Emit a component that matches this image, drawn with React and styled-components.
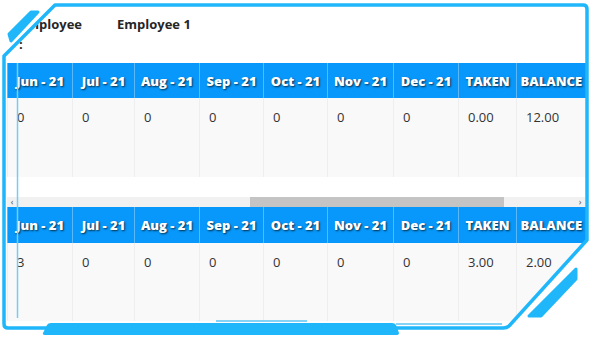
import React from 'react'
import styled, { createGlobalStyle } from 'styled-components'

const GlobalStyle = createGlobalStyle`
    html, body {
        margin: 0;
        padding: 0;
        background: #ffffff;
    }
    body {
        font-family: "Open Sans", "Liberation Sans", sans-serif;
    }
`

const columns = [
    { label: 'Jun - 21', width: 65 },
    { label: 'Jul - 21', width: 62 },
    { label: 'Aug - 21', width: 65 },
    { label: 'Sep - 21', width: 64 },
    { label: 'Oct - 21', width: 64 },
    { label: 'Nov - 21', width: 66 },
    { label: 'Dec - 21', width: 65 },
    { label: 'TAKEN', width: 58 },
    { label: 'BALANCE', width: 69 },
]

const rows = [
    ['0', '0', '0', '0', '0', '0', '0', '0.00', '12.00'],
    ['3', '0', '0', '0', '0', '0', '0', '3.00', '2.00'],
]

const Frame = styled.div`
    position: relative;
    width: 600px;
    height: 340px;
    overflow: hidden;
`

const Content = styled.div`
    height: 100%;
    box-sizing: border-box;
    padding: 8px 15px 0 7px;
    display: flex;
    flex-direction: column;
    clip-path: polygon(56px 6px, 586px 6px, 586px 240px, 507px 326px, 5px 326px, 5px 57px);
`

const InfoRow = styled.div`
    display: flex;
    height: 55px;
    box-sizing: border-box;
    padding: 6px 0 0 12px;
    font-size: 13px;
    font-weight: 700;
    line-height: 20px;
    color: #262626;
`

const InfoLabel = styled.div`
    width: 66px;
    margin-right: 32px;
`

const Table = styled.table`
    width: 578px;
    border-collapse: collapse;
    table-layout: fixed;
`

const HeadCell = styled.th`
    height: ${p => p.$tall ? 36 : 35}px;
    padding: 0;
    background: #0898fb;
    border-left: 1px solid #5ab8fb;
    color: #ffffff;
    font-size: 13px;
    font-weight: 800;
    text-align: center;
    text-shadow: 1px 1px 2px rgba(0, 0, 0, 0.7);
    white-space: nowrap;
`

const BodyCell = styled.td`
    height: ${p => p.$height}px;
    box-sizing: border-box;
    padding: 9px 8px 0 9px;
    vertical-align: top;
    background: #f9f9f9;
    border-left: 1px solid #eeeeee;
    color: #333333;
    font-size: 13px;
    line-height: 20px;
`

const Gap = styled.div`
    height: 20px;
`

const ScrollTrack = styled.div`
    display: flex;
    align-items: center;
    height: 10px;
    width: 578px;
    background: #f1f1f1;
    color: #505050;
    font-size: 9px;
    line-height: 10px;
`

const Arrow = styled.span`
    width: 10px;
    text-align: center;
`

const Thumb = styled.div`
    height: 10px;
    width: 254px;
    margin-left: 233px;
    margin-right: auto;
    background: #c4c4c4;
`

const Overlay = styled.svg`
    position: absolute;
    inset: 0;
    pointer-events: none;
`

function LeaveTable({ values, tall, bodyHeight }) {
    return (
        <Table>
            <colgroup>
                {columns.map(c => <col key={c.label} style={{ width: c.width }} />)}
            </colgroup>
            <thead>
                <tr>
                    {columns.map(c => <HeadCell key={c.label} $tall={tall}>{c.label}</HeadCell>)}
                </tr>
            </thead>
            <tbody>
                <tr>
                    {values.map((v, i) => <BodyCell key={i} $height={bodyHeight}>{v}</BodyCell>)}
                </tr>
            </tbody>
        </Table>
    )
}

// decorative sci-fi border drawn over the clipped content
function FrameLines() {
    const blue = '#1fb7fa'
    return (
        <Overlay width="600" height="340" viewBox="0 0 600 340">
            <path
                d="M55 5 H583 Q587 5 587 9 V240 L509 326 Q507 328 503 328 H8 Q4 328 4 324 V56 Z"
                fill="none" stroke={blue} strokeWidth="3.5" strokeLinejoin="round"
            />
            <path
                d="M31 12 L38 12 L11 41 L9 34 Z"
                fill={blue} stroke={blue} strokeWidth="3" strokeLinejoin="round"
            />
            <path
                d="M576 269 V279 L541 316 H529 Z"
                fill={blue} stroke={blue} strokeWidth="3" strokeLinejoin="round"
            />
            <path
                d="M43 333 L47 325 Q48 323 51 323 H392 Q395 323 396 325 L399 333 Q399 335 396 335 H46 Q42 335 43 333 Z"
                fill={blue}
            />
            <line x1="17.5" y1="63" x2="17.5" y2="318" stroke="#74ccf7" strokeWidth="1.5" />
            <line x1="216" y1="321" x2="307" y2="321" stroke="#5cc4f5" strokeWidth="1.5" />
            <line x1="396" y1="324" x2="502" y2="324" stroke="#5cc4f5" strokeWidth="1.5" />
        </Overlay>
    )
}

export default function App() {
    return (
        <Frame>
            <GlobalStyle />
            <Content>
                <InfoRow>
                    <InfoLabel>Employee :</InfoLabel>
                    <div>Employee 1</div>
                </InfoRow>
                <LeaveTable values={rows[0]} bodyHeight={79} />
                <Gap />
                <ScrollTrack>
                    <Arrow>‹</Arrow>
                    <Thumb />
                    <Arrow>›</Arrow>
                </ScrollTrack>
                <LeaveTable values={rows[1]} tall bodyHeight={78} />
            </Content>
            <FrameLines />
        </Frame>
    )
}
